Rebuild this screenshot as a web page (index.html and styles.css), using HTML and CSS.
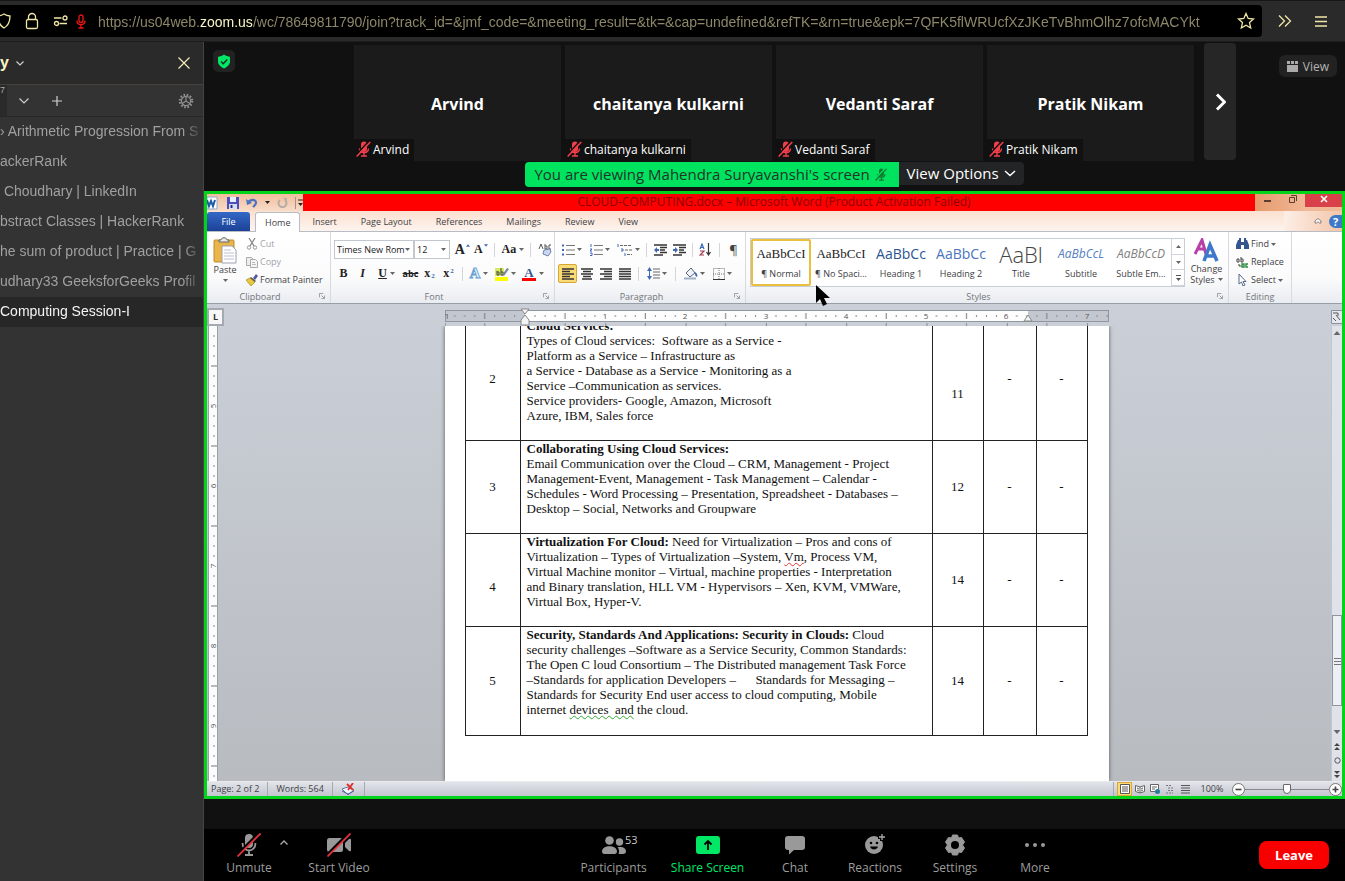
FILE: index.html
```html
<!DOCTYPE html>
<html lang="en">
<head>
<meta charset="utf-8">
<title>Cloud Computing Session-I</title>
<link rel="stylesheet" href="styles.css">
</head>
<body>
<svg class="defs" aria-hidden="true">
  <symbol id="caret" viewBox="0 0 5 3"><path d="M0 0h5L2.500 3z" fill="currentColor"/></symbol>
  <symbol id="mic-off" viewBox="0 0 15 16"><path d="M5 3.500a3 3 0 0 1 6 0V8a3 3 0 0 1-6 0z" fill="currentColor"/><path d="M3.500 7.500c0 5.500 9 5.500 9 0M8 11.500V15M5 15h6" fill="none" stroke="currentColor" stroke-width="1.400"/><path d="M1 13L12.500.500" stroke="var(--gap)" stroke-width="1.500"/><path d="M.7 15.500L14.300 1" stroke="currentColor" stroke-width="1.500"/></symbol>
  <symbol id="launch" viewBox="0 0 7 7"><path d="M.5 5V.5H5M3 3l3 3M6.500 3v3.500H3" fill="none" stroke="#8a8f98"/></symbol>
</svg>

<header class="browser">
  <div class="address">
    <svg class="shield" viewBox="0 0 14 16"><path d="M7 1c2 1.300 4 1.800 6 2 0 6-1.500 9.500-6 12C2.500 12.500 1 9 1 3c2-.2 4-.7 6-2z"/></svg>
    <svg class="lock" viewBox="0 0 14 18"><rect x="1.500" y="7.500" width="11" height="9" rx="1.500"/><path d="M3.500 7.500V5a3.500 3.500 0 0 1 7 0v2.500"/></svg>
    <svg class="perm" viewBox="0 0 16 12"><circle cx="12" cy="3" r="2"/><circle cx="3.500" cy="8.500" r="2"/><path d="M1 3h7.500M6.500 8.500H14"/></svg>
    <svg class="rec" viewBox="0 0 10 15"><rect x="3" y="1" width="4" height="7.500" rx="2"/><path d="M1 6.500c0 5.500 8 5.500 8 0M5 10.500V14M2.500 14h5"/></svg>
    <div class="url">https://us04web.<b>zoom.us</b>/wc/78649811790/join?track_id=&amp;jmf_code=&amp;meeting_result=&amp;tk=&amp;cap=undefined&amp;refTK=&amp;rn=true&amp;epk=7QFK5flWRUcfXzJKeTvBhmOlhz7ofcMACYkt</div>
    <button class="bar-btn" aria-label="Bookmark"><svg viewBox="0 0 18 18" width="18" height="18"><path d="M9 1.500l2.200 5 5.300.5-4 3.600 1.200 5.400L9 13.200 4.300 16l1.200-5.400-4-3.600 5.300-.5z"/></svg></button>
  </div>
  <button class="bar-btn more-tools" aria-label="More tools"><svg viewBox="0 0 14 12" width="14" height="12"><path d="M1 .5L6.500 6 1 11.500M7 .5L12.500 6 7 11.500"/></svg></button>
  <button class="bar-btn" aria-label="Menu"><svg viewBox="0 0 12 11" width="12" height="11"><path d="M0 1h12M0 5.500h12M0 10h12"/></svg></button>
</header>

<div class="below">
<aside class="sidebar">
  <div class="side-head"><span class="side-title">y</span><svg viewBox="0 0 8 5" width="8" height="5"><path d="M.5.500L4 4 7.500.500"/></svg><button class="close" aria-label="Close sidebar"><svg viewBox="0 0 12 12" width="12" height="12"><path d="M.5.500l11 11M11.500.500l-11 11"/></svg></button></div>
  <div class="side-tools">
    <span class="count">7</span>
    <button aria-label="Expand"><svg viewBox="0 0 10 6" width="10" height="6"><path d="M.5.500L5 5 9.500.500"/></svg></button>
    <button aria-label="New tab"><svg viewBox="0 0 10 10" width="10" height="10"><path d="M5 0v10M0 5h10"/></svg></button>
    <button class="gear" aria-label="Settings"><svg viewBox="0 0 16 16" width="16" height="16"><circle cx="8" cy="8" r="4.600"/><circle cx="8" cy="8" r="6.200" stroke-width="2.200" stroke-dasharray="1.600 1.646"/><path d="M8 8V3.500M8 8l-3.800 2.500M8 8l3.800 2.500"/></svg></button>
  </div>
  <ul class="tabs-list">
    <li><a href="#">› Arithmetic Progression From S</a></li>
    <li><a href="#">ackerRank</a></li>
    <li><a href="#">&nbsp;Choudhary | LinkedIn</a></li>
    <li><a href="#">bstract Classes | HackerRank</a></li>
    <li><a href="#">he sum of product | Practice | G</a></li>
    <li><a href="#">udhary33 GeeksforGeeks Profil</a></li>
    <li class="active"><a href="#">Computing Session-I</a></li>
  </ul>
</aside>

<main class="meeting">
  <section class="gallery">
    <button class="secure" aria-label="Meeting is encrypted"><svg viewBox="0 0 14 15" width="14" height="15"><path d="M7 .5c2 1.600 4 2 6 2.200v4.800c0 3.500-3 5.500-6 7-3-1.500-6-3.500-6-7V2.700C3 2.500 5 2.100 7 .5z" fill="#00e766"/><path d="M4 7.500l2.200 2.200L10.200 5.500" fill="none" stroke="#222" stroke-width="1.300"/></svg></button>
    <div class="strip">
      <div class="tile"><strong>Arvind</strong><span class="tag"><svg><use href="#mic-off"/></svg>Arvind</span></div>
      <div class="tile"><strong>chaitanya kulkarni</strong><span class="tag"><svg><use href="#mic-off"/></svg>chaitanya kulkarni</span></div>
      <div class="tile"><strong>Vedanti Saraf</strong><span class="tag"><svg><use href="#mic-off"/></svg>Vedanti Saraf</span></div>
      <div class="tile"><strong>Pratik Nikam</strong><span class="tag"><svg><use href="#mic-off"/></svg>Pratik Nikam</span></div>
      <button class="next" aria-label="Next participants"><svg viewBox="0 0 12 18" width="12" height="18"><path d="M3 1.500L10.500 9 3 16.500" fill="none" stroke="#fff" stroke-width="3"/></svg></button>
    </div>
    <button class="view"><svg viewBox="0 0 11 11" width="11" height="11"><path d="M0 4h11v7H0zM0 0h3v3H0zM4 0h3v3H4zM8 0h3v3H8z" fill="#aaa"/></svg>View</button>
  </section>

  <div class="notice">
    <span class="viewing">You are viewing Mahendra Suryavanshi's screen <svg><use href="#mic-off"/></svg></span>
    <button class="view-options">View Options <svg viewBox="0 0 12 7" width="12" height="7"><path d="M1 1l5 4.500L11 1" fill="none" stroke="#fff" stroke-width="1.500"/></svg></button>
  </div>

  <section class="word">
    <div class="titlebar">
      <div class="qat">
        <svg class="q-word" viewBox="0 0 11 14" width="11" height="14"><path d="M0 1h10v12H0z" fill="#fff" stroke="#8eaccc"/><path d="M0 4l2 6 2-5 2 5 2-6" fill="none" stroke="#1d5aa6" stroke-width="2"/></svg>
        <svg viewBox="0 0 12 12" width="12" height="12"><path d="M0 0h12v12H0z" fill="#4b4fbc"/><path d="M3 0h6v5H3z" fill="#e9edff"/><path d="M2 7h8v5H2z" fill="#d8dcf4"/><path d="M3.500 8h2v3h-2z" fill="#24307a"/></svg>
        <svg viewBox="0 0 12 10" width="12" height="10"><path d="M2 5c2-4 8-4 8-.5C10 7 8 8 7 9" fill="none" stroke="#4e73c2" stroke-width="2.200"/><path d="M0 1l1 6 5-2z" fill="#4e73c2"/></svg>
        <svg class="dark" width="5" height="3"><use href="#caret"/></svg>
        <svg viewBox="0 0 11 10" width="11" height="10"><path d="M3 2a4 4 0 1 0 5 0" fill="none" stroke="#b7aca6" stroke-width="2"/><path d="M6 0h4v4z" fill="#b7aca6"/></svg>
        <svg class="q-more" viewBox="0 0 8 12" width="8" height="12"><path d="M.5 0v12" stroke="#a88f83"/><path d="M3 3h5" stroke="#222"/><path d="M3 6h5L5.500 9z" fill="#222"/></svg>
      </div>
      <div class="doc-title">CLOUD-COMPUTING.docx – Microsoft Word (Product Activation Failed)</div>
      <div class="win">
        <button aria-label="Minimize"><svg viewBox="0 0 8 8" width="8" height="8"><path d="M0 6h7" stroke="#5a3e34" stroke-width="2"/></svg></button>
        <button aria-label="Restore"><svg viewBox="0 0 8 8" width="8" height="8"><path d="M.5 2.500h5v5h-5zM2 .500h5.500V6" fill="none" stroke="#5a3e34"/></svg></button>
        <button class="win-x" aria-label="Close"><svg viewBox="0 0 8 8" width="8" height="8"><path d="M1 1l6 6M7 1L1 7" stroke="#fff" stroke-width="1.600"/></svg></button>
      </div>
    </div>
    <nav class="tabs">
      <button class="file">File</button><button class="home">Home</button><button>Insert</button><button>Page Layout</button><button>References</button><button>Mailings</button><button>Review</button><button>View</button>
      <span class="help"><svg viewBox="0 0 8 6" width="8" height="6"><path d="M1 3l3-2.500L7 3v2H5.500L4 3.700 2.500 5H1z" fill="#fff" stroke="#666" stroke-width=".8"/></svg><button class="q" aria-label="Help">?</button></span>
    </nav>

    <div class="ribbon">
      <div class="group clipboard">
        <div class="content">
          <button class="paste"><svg viewBox="0 0 24 27" width="24" height="27"><rect x="1" y="3" width="20" height="22" rx="1" fill="#eab64c" stroke="#c08a2c"/><path d="M6 5V3h2c0-3 6-3 6 0h2v2z" fill="#e8e8e8" stroke="#666"/><path d="M9 9h10l4 4v13H9z" fill="#fff" stroke="#98a2b4"/><path d="M11 13h7M11 16h10M11 19h10M11 22h10" stroke="#b9c3d3"/></svg>Paste<svg class="caret"><use href="#caret"/></svg></button>
          <div class="stack">
            <button class="off"><svg viewBox="0 0 12 12" width="12" height="12"><path d="M3 0l5 8M9 0L4 8" stroke="#888" stroke-width="1.300"/><circle cx="3" cy="9.500" r="1.700" fill="none" stroke="#999"/><circle cx="9" cy="9.500" r="1.700" fill="none" stroke="#999"/></svg>Cut</button>
            <button class="off"><svg viewBox="0 0 12 12" width="12" height="12"><path d="M.5 1.500h5l2 2v6h-7z" fill="#eee" stroke="#aaa"/><path d="M4.500 3.500h5l2 2v6h-7z" fill="#f5f5f5" stroke="#aaa"/><path d="M6 6.500h3M6 8.500h4" stroke="#bbb"/></svg>Copy</button>
            <button><svg viewBox="0 0 12 12" width="12" height="12"><path d="M7 4l3-4 2 2-3 4z" fill="#555a9c"/><path d="M4 4l5 4-4 4-5-6z" fill="#e9c93b" stroke="#a58a1e" stroke-width=".7"/><path d="M5 3l5 4-1 1-5-4z" fill="#555"/></svg>Format Painter</button>
          </div>
        </div>
        <div class="label">Clipboard<svg class="launch"><use href="#launch"/></svg></div>
      </div>

      <div class="group font">
        <div class="content rows">
          <div class="row">
            <span class="combo face"><select aria-label="Font"><option>Times New Rom</option></select><svg class="caret"><use href="#caret"/></svg></span>
            <span class="combo size"><select aria-label="Font size"><option>12</option></select><svg class="caret"><use href="#caret"/></svg></span>
            <button class="t w20 big">A<svg class="mark" viewBox="0 0 5 3"><path d="M0 3h5L2.500 0z"/></svg></button><button class="t w20">A<svg class="mark" viewBox="0 0 5 3"><path d="M0 0h5L2.500 3z"/></svg></button><i class="sep"></i>
            <button class="t w28">Aa<svg class="caret"><use href="#caret"/></svg></button><i class="sep"></i>
            <button class="w20" aria-label="Clear formatting"><svg viewBox="0 0 14 14" width="14" height="14"><path d="M1 6L3 1l2 5M7 1v5h2V3H7M13 2h-2v4h2" fill="none" stroke="#555"/><path d="M6 7l6-1 1 3-3 4-5-2z" fill="#c9d7f0" stroke="#6a83ad"/></svg></button>
          </div>
          <div class="row">
            <button class="t w20"><b>B</b></button><button class="t w20"><i>I</i></button><button class="t w30"><u>U</u><svg class="caret"><use href="#caret"/></svg></button><button class="t w20 small"><s>abc</s></button><button class="t w20">x<sub>2</sub></button><button class="t w20">x<sup>2</sup></button><i class="sep"></i>
            <button class="t w24 glow">A<svg class="caret"><use href="#caret"/></svg></button>
            <button class="w28" aria-label="Highlight"><svg viewBox="0 0 14 14" width="14" height="14"><path d="M0 10h13v4H0z" fill="#ff0"/><path d="M0 1h9v8H0z" fill="#d6ea60"/><path d="M2 4v4h2V5H2M6 1v7h2V5H6" fill="none" stroke="#444"/><path d="M7 8l5-7 2 1-5 7z" fill="#7a8899"/></svg><svg class="caret"><use href="#caret"/></svg></button>
            <button class="t w28 ink"><span>A</span><svg class="caret"><use href="#caret"/></svg></button>
          </div>
        </div>
        <div class="label">Font<svg class="launch"><use href="#launch"/></svg></div>
      </div>

      <div class="group para">
        <div class="content rows">
          <div class="row">
            <button class="w28" aria-label="Bullets"><svg viewBox="0 0 13 12" width="13" height="12"><path d="M0 1.500h2M0 6h2M0 10.500h2" stroke="#3f68b5" stroke-width="2"/><path d="M4 1.500h9M4 6h9M4 10.500h9" stroke="#777"/></svg><svg class="caret"><use href="#caret"/></svg></button>
            <button class="w28" aria-label="Numbering"><svg viewBox="0 0 13 12" width="13" height="12"><path d="M1 0v3M0 5h2l-2 2h2M0 9h2v2.500H0" fill="none" stroke="#3f68b5"/><path d="M4 1.500h9M4 6h9M4 10.500h9" stroke="#777"/></svg><svg class="caret"><use href="#caret"/></svg></button>
            <button class="w28" aria-label="Multilevel list"><svg viewBox="0 0 16 12" width="16" height="12"><path d="M1 0v3M4 5h2v2H4M8 9v3" fill="none" stroke="#3f68b5"/><path d="M3 1.500h11M8 6h7M10 10.500h5" stroke="#666" stroke-dasharray="3 1"/></svg><svg class="caret"><use href="#caret"/></svg></button><i class="sep"></i>
            <button class="w20" aria-label="Decrease indent"><svg viewBox="0 0 13 12" width="13" height="12"><path d="M0 1h13M6 3.500h7M6 6h5M6 8.500h7M0 11h9" stroke="#333" stroke-width="1.300"/><path d="M0 6l3-3v2h2v2H3v2z" fill="#3f68b5"/></svg></button>
            <button class="w20" aria-label="Increase indent"><svg viewBox="0 0 13 12" width="13" height="12"><path d="M0 1h13M6 3.500h7M6 6h5M6 8.500h7M0 11h9" stroke="#333" stroke-width="1.300"/><path d="M5 6L2 3v2H0v2h2v2z" fill="#3f68b5"/></svg></button><i class="sep slim"></i>
            <button class="w20" aria-label="Sort"><svg viewBox="0 0 13 13" width="13" height="13"><path d="M1 6l2-5 2 5M1.500 4.500h3" fill="none" stroke="#3f68b5" stroke-width="1.200"/><path d="M1 8h4l-4 4h4" fill="none" stroke="#a33a52" stroke-width="1.200"/><path d="M9.500 0v11M7.500 9l2 3 2-3" fill="none" stroke="#333" stroke-width="1.200"/></svg></button><i class="sep"></i>
            <button class="w20 pil">¶</button>
          </div>
          <div class="row">
            <button class="w20 on" aria-label="Align left"><svg viewBox="0 0 12 12" width="12" height="12"><path d="M0 1h12M0 3.500h8M0 6h12M0 8.500h8M0 11h12" stroke="#333" stroke-width="1.300"/></svg></button>
            <button class="w20" aria-label="Center"><svg viewBox="0 0 12 12" width="12" height="12"><path d="M0 1h12M2 3.500h8M0 6h12M2 8.500h8M1 11h10" stroke="#333" stroke-width="1.300"/></svg></button>
            <button class="w20" aria-label="Align right"><svg viewBox="0 0 12 12" width="12" height="12"><path d="M0 1h12M4 3.500h8M0 6h12M4 8.500h8M0 11h12" stroke="#333" stroke-width="1.300"/></svg></button>
            <button class="w20" aria-label="Justify"><svg viewBox="0 0 12 12" width="12" height="12"><path d="M0 1h12M0 3.500h12M0 6h12M0 8.500h12M0 11h12" stroke="#333" stroke-width="1.300"/></svg></button><i class="sep"></i>
            <button class="w28" aria-label="Line spacing"><svg viewBox="0 0 13 13" width="13" height="13"><path d="M2.500 2v9" stroke="#3f68b5"/><path d="M0 4l2.500-4L5 4zM0 9l2.500 4L5 9z" fill="#3f68b5"/><path d="M6 2h7M6 5h7M6 8h7M6 11h7" stroke="#666"/></svg><svg class="caret"><use href="#caret"/></svg></button><i class="sep"></i>
            <button class="w28" aria-label="Shading"><svg viewBox="0 0 14 13" width="14" height="13"><path d="M2 6l5-5 4 5-5 4z" fill="#eef2f8" stroke="#56657c"/><path d="M11 5c2 1 3 3 2 5-2-1-2-2-2-5z" fill="#3f68b5"/><path d="M0 11.500h12" stroke="#9fb0c4" stroke-width="2"/></svg><svg class="caret"><use href="#caret"/></svg></button>
            <button class="w28" aria-label="Borders"><svg viewBox="0 0 12 12" width="12" height="12"><path d="M.5.500h11v11H.5zM6 0v12M0 6h12" fill="none" stroke="#777" stroke-dasharray="1 1"/><path d="M0 11.500h12" stroke="#333"/></svg><svg class="caret"><use href="#caret"/></svg></button>
          </div>
        </div>
        <div class="label">Paragraph<svg class="launch"><use href="#launch"/></svg></div>
      </div>

      <div class="group styles">
        <div class="content">
          <div class="style-box">
            <button class="card sel"><span class="s-serif">AaBbCcI</span><span>¶ Normal</span></button>
            <button class="card"><span class="s-serif">AaBbCcI</span><span>¶ No Spaci...</span></button>
            <button class="card"><span class="s-h1">AaBbCc</span><span>Heading 1</span></button>
            <button class="card"><span class="s-h2">AaBbCc</span><span>Heading 2</span></button>
            <button class="card"><span class="s-title">AaBl</span><span>Title</span></button>
            <button class="card"><span class="s-sub">AaBbCcL</span><span>Subtitle</span></button>
            <button class="card"><span class="s-em">AaBbCcD</span><span>Subtle Em...</span></button>
            <div class="spin"><button aria-label="Up"><svg class="caret up"><use href="#caret"/></svg></button><button aria-label="Down"><svg class="caret"><use href="#caret"/></svg></button><button aria-label="More"><svg viewBox="0 0 5 6" width="5" height="6"><path d="M0 .5h5" stroke="#555"/><path d="M0 3h5L2.500 6z" fill="#555"/></svg></button></div>
          </div>
          <button class="change"><svg viewBox="0 0 26 25" width="26" height="25"><path d="M1 16L8 2l4 14M3 11h8" fill="none" stroke="#b640a8" stroke-width="3"/><path d="M10 23l6-16 7 16M12 18h9" fill="none" stroke="#3d78cc" stroke-width="3.500"/></svg><span>Change</span><span>Styles <svg class="caret"><use href="#caret"/></svg></span></button>
        </div>
        <div class="label">Styles<svg class="launch"><use href="#launch"/></svg></div>
      </div>

      <div class="group editing">
        <div class="content">
          <div class="stack">
            <button><svg viewBox="0 0 13 12" width="13" height="12"><path d="M2 2h3v2h3V2h3l2 5v4H8V7H5v4H0V7z" fill="#35558f"/><path d="M3 0h2v2H3zM8 0h2v2H8z" fill="#35558f"/></svg>Find <svg class="caret"><use href="#caret"/></svg></button>
            <button><svg viewBox="0 0 13 12" width="13" height="12"><path d="M1 3h2v3H1zM5 1v5h2V3H5M3 8v2h2" fill="none" stroke="#444"/><path d="M6 8h2v3H6zM12 8h-2v3h2" fill="none" stroke="#2a8a3c" stroke-width="1.400"/></svg>Replace</button>
            <button><svg viewBox="0 0 13 12" width="13" height="12"><path d="M3 0v10l2.500-2 1.500 4 2-1-2-3.500h3z" fill="#fff" stroke="#55698a"/></svg>Select <svg class="caret"><use href="#caret"/></svg></button>
          </div>
        </div>
        <div class="label">Editing</div>
      </div>
    </div>

    <div class="workspace">
      <div class="corner">L</div>
      <svg class="hruler" viewBox="0 0 664 22" width="664" height="22">
        <defs><pattern id="tick" x="80" width="80.300" height="22" patternUnits="userSpaceOnUse"><path d="M10 11v2M20 11v2M30 11v2M50 11v2M60 11v2M70 11v2" stroke="#888"/><path d="M40 9v6" stroke="#777"/><path d="M40 19v3M.5 19v3" stroke="#888"/></pattern></defs>
        <rect x=".5" y="6.500" width="663" height="11" fill="#c3c7d0" stroke="#9096a0"/><rect x="80" y="7" width="503" height="10" fill="#fdfdfd"/>
        <rect width="664" height="22" fill="url(#tick)"/>
        <g class="nums"><text x="2" y="15">1</text><text x="160" y="15">1</text><text x="240" y="15">2</text><text x="321" y="15">3</text><text x="401" y="15">4</text><text x="481" y="15">5</text><text x="561" y="15">6</text><text x="642" y="15">7</text></g>
        <path d="M76 5h8l-4 5zM76 16l4-5 4 5v5h-8zM579 17l4-6 4 6z" fill="#f4f4f4" stroke="#888"/>
      </svg>
      <button class="ruler-toggle" aria-label="Toggle ruler"><svg viewBox="0 0 11 14" width="11" height="14"><path d="M.5.500h12v13H.5z" fill="#e4e8ee" stroke="#8b929c"/><path d="M2 3h5v3M5 5l4 5M2 8l3 3" fill="none" stroke="#555"/></svg></button>

      <svg class="vruler" viewBox="0 0 13 456" preserveAspectRatio="xMidYMin slice">
        <defs><pattern id="vtick" width="13" height="80" patternUnits="userSpaceOnUse"><path d="M6 10h2M6 20h2M6 30h2M6 50h2M6 60h2M6 70h2" stroke="#888"/><path d="M4 40h6" stroke="#777"/></pattern></defs>
        <rect x="1.500" y="-1" width="9" height="900" fill="#fcfcfc" stroke="#9aa0aa"/><rect width="13" height="900" fill="url(#vtick)"/>
        <g class="nums"><text transform="translate(9 80) rotate(-90)">5</text><text transform="translate(9 160) rotate(-90)">6</text><text transform="translate(9 240) rotate(-90)">7</text><text transform="translate(9 320) rotate(-90)">8</text><text transform="translate(9 400) rotate(-90)">9</text></g>
      </svg>

      <article class="page">
        <table>
          <colgroup><col class="c-no"><col class="c-text"><col class="c-hr"><col class="c-a"><col class="c-b"></colgroup>
          <tr class="r8"><td>2</td><td class="txt"><b>Cloud Services:</b><br>Types of Cloud services: &nbsp;Software as a Service -<br>Platform as a Service – Infrastructure as<br>a Service - Database as a Service - Monitoring as a<br>Service –Communication as services.<br>Service providers- Google, Amazon, Microsoft<br>Azure, IBM, Sales force</td><td><br>&nbsp;<br>11</td><td>-</td><td>-</td></tr>
          <tr class="r6"><td>3</td><td class="txt"><b>Collaborating Using Cloud Services:</b><br>Email Communication over the Cloud – CRM, Management - Project<br>Management-Event, Management - Task Management – Calendar -<br>Schedules - Word Processing – Presentation, Spreadsheet - Databases –<br>Desktop – Social, Networks and Groupware</td><td>12</td><td>-</td><td>-</td></tr>
          <tr class="r6"><td class="low">4</td><td class="txt"><b>Virtualization For Cloud:</b> Need for Virtualization – Pros and cons of<br>Virtualization – Types of Virtualization –System, <span class="bad">Vm</span>, Process VM,<br>Virtual Machine monitor – Virtual, machine properties - Interpretation<br>and Binary translation, HLL VM - Hypervisors – Xen, KVM, VMWare,<br>Virtual Box, Hyper-V.</td><td>14</td><td>-</td><td>-</td></tr>
          <tr class="r7"><td>5</td><td class="txt"><b>Security, Standards And Applications: Security in Clouds:</b> Cloud<br>security challenges –Software as a Service Security, Common Standards:<br>The Open C loud Consortium – The Distributed management Task Force<br>–Standards for application Developers – &nbsp; &nbsp; &nbsp;Standards for Messaging –<br>Standards for Security End user access to cloud computing, Mobile<br>internet <span class="gram">devices &nbsp;and</span> the cloud.</td><td>14</td><td>-</td><td>-</td></tr>
        </table>
      </article>

      <div class="scroll">
        <button aria-label="Scroll up"><svg class="caret up big-caret"><use href="#caret"/></svg></button>
        <div class="track"><div class="thumb"></div></div>
        <button aria-label="Scroll down"><svg class="caret big-caret"><use href="#caret"/></svg></button>
        <button aria-label="Previous page"><svg viewBox="0 0 6 7" width="6" height="7"><path d="M0 3l3-3 3 3zM0 7l3-3 3 3z" fill="#444"/></svg></button>
        <button aria-label="Browse object"><svg viewBox="0 0 7 7" width="7" height="7"><circle cx="3.500" cy="3.500" r="2.700" fill="none" stroke="#555"/></svg></button>
        <button aria-label="Next page"><svg viewBox="0 0 6 7" width="6" height="7"><path d="M0 0l3 3 3-3zM0 4l3 3 3-3z" fill="#444"/></svg></button>
      </div>
    </div>

    <div class="status">
      <span class="cell">Page: 2 of 2</span><span class="cell">Words: 564</span>
      <span class="cell"><svg viewBox="0 0 15 12" width="15" height="12"><path d="M1 6l6-2 6 3-6 5z" fill="#f4f6fc" stroke="#6678aa"/><path d="M1 8l6 3 6-3" fill="none" stroke="#4a5fa5"/><path d="M6 1l6 6M12 0L7 7" stroke="#e0302a" stroke-width="1.800"/></svg></span>
      <span class="views">
        <button class="on" aria-label="Print layout"><svg viewBox="0 0 10 10" width="10" height="10"><path d="M.5.500h9v9h-9zM2 3h6M2 5h6M2 7h6" fill="#fff" stroke="#555"/></svg></button>
        <button aria-label="Full screen reading"><svg viewBox="0 0 10 10" width="10" height="10"><path d="M.5 1.500L5 3l4.500-1.500v6L5 9 .5 7.500zM5 3v6M2 4l2 1M2 6l2 1M8 4L6 5M8 6L6 7" fill="#fafafa" stroke="#666"/></svg></button>
        <button aria-label="Web layout"><svg viewBox="0 0 10 10" width="10" height="10"><path d="M.5.500h8v7h-8zM2 3h5M2 5h3" fill="#fff" stroke="#666"/><circle cx="7.500" cy="7.500" r="2.500" fill="#287c9c"/></svg></button>
        <button aria-label="Outline"><svg viewBox="0 0 10 10" width="10" height="10"><path d="M1 1.500h6M3 4h6M3 6.500h6M1 9h7" stroke="#777" stroke-dasharray="2 1"/></svg></button>
        <button aria-label="Draft"><svg viewBox="0 0 10 10" width="10" height="10"><path d="M1 1.500h9M1 4h9M1 6.500h9M1 9h9" stroke="#555"/></svg></button>
      </span>
      <span class="pct">100%</span>
      <button class="zb" aria-label="Zoom out"><svg viewBox="0 0 13 13" width="13" height="13"><circle cx="6.500" cy="6.500" r="6" fill="#fff" stroke="#777"/><path d="M3.500 6.500h6" stroke="#444" stroke-width="1.600"/></svg></button>
      <input class="zoom" type="range" aria-label="Zoom" min="0" max="100" value="50">
      <button class="zb" aria-label="Zoom in"><svg viewBox="0 0 13 13" width="13" height="13"><circle cx="6.500" cy="6.500" r="6" fill="#fff" stroke="#777"/><path d="M3.500 6.500h6M6.500 3.500v6" stroke="#444" stroke-width="1.600"/></svg></button>
    </div>
    <svg class="pointer" viewBox="0 0 14 21" width="14" height="21"><path d="M0 0v18l4-4 3 7 4-2-3-6h6z" fill="#000"/></svg>
  </section>

  <footer class="controls">
    <div class="left">
      <button class="ctl"><svg viewBox="0 0 24 24" width="24" height="24"><rect x="8" y="1" width="8" height="14" rx="4" fill="#999"/><path d="M5.500 10c0 10 13 10 13 0M12 17.500V22M8 22h8" fill="none" stroke="#999" stroke-width="1.800"/><path d="M0 22L22 0" stroke="#000" stroke-width="3"/><path d="M.5 23.500l23-23" stroke="#e8333e" stroke-width="1.700"/></svg>Unmute</button>
      <button class="arrow" aria-label="Audio options"><svg viewBox="0 0 8 5" width="8" height="5"><path d="M.5 4.500L4 1l3.500 3.500" fill="none" stroke="#aaa" stroke-width="1.300"/></svg></button>
      <button class="ctl"><svg viewBox="0 0 24 24" width="24" height="24"><rect x="0" y="5" width="16" height="14" rx="2.500" fill="#999"/><path d="M18 10l4-4q2-1 2 1v10q0 2-2 1l-4-4z" fill="#999"/><path d="M0 22L22 0" stroke="#000" stroke-width="3"/><path d="M.5 23.500l23-23" stroke="#e8333e" stroke-width="1.700"/></svg>Start Video</button>
    </div>
    <div class="center">
      <button class="ctl people"><svg viewBox="0 0 24 24" width="24" height="24" fill="#999"><circle cx="7.500" cy="7.500" r="4.300"/><circle cx="17.500" cy="9" r="3.700"/><path d="M0 18.500c0-7 15-7 15 0 0 3-2 2.500-7.500 2.500S0 21.500 0 18.500z"/><path d="M15.500 14.300c5-1.300 8.500.7 8.500 4.200 0 3-3 2.500-7.500 2.500 1-2 .8-5-1-6.700z"/></svg><span class="num">53</span>Participants</button>
      <button class="ctl share"><svg viewBox="0 0 24 24" width="24" height="24"><rect y="3" width="24" height="18" rx="3" fill="#00e766"/><path d="M12 17V8.500M8.500 11.500L12 8l3.500 3.500" fill="none" stroke="#000" stroke-width="1.800"/></svg>Share Screen</button>
      <button class="ctl"><svg viewBox="0 0 24 24" width="24" height="24"><path d="M5 3h14a3 3 0 0 1 3 3v8a3 3 0 0 1-3 3h-8l-5 4.500V17H5a3 3 0 0 1-3-3V6a3 3 0 0 1 3-3z" fill="#999"/></svg>Chat</button>
      <button class="ctl"><svg viewBox="0 0 24 24" width="24" height="24"><circle cx="11" cy="12" r="9" fill="#999"/><circle cx="8" cy="10" r="1.300"/><circle cx="14" cy="10" r="1.300"/><path d="M7 13.500c1 4 7 4 8 0z"/><path d="M19 0v8M15 4h8" stroke="#000" stroke-width="4"/><path d="M19 1v6M16 4h6" stroke="#aaa" stroke-width="1.300"/></svg>Reactions</button>
      <button class="ctl"><svg viewBox="0 0 24 24" width="24" height="24"><path d="M9.500 2h5l1 3 3-.5 3 4.500-2 3 2 3-3 4.500-3-.5-1 3h-5l-1-3-3 .5-3-4.500 2-3-2-3 3-4.500 3 .500z" fill="#999" stroke="#999" stroke-linejoin="round"/><circle cx="12" cy="12" r="4" fill="#000"/></svg>Settings</button>
      <button class="ctl"><svg viewBox="0 0 24 24" width="24" height="24" fill="#999"><circle cx="4" cy="12" r="2"/><circle cx="12" cy="12" r="2"/><circle cx="20" cy="12" r="2"/></svg>More</button>
    </div>
    <button class="leave">Leave</button>
  </footer>
</main>
</div>
</body>
</html>
```
FILE: styles.css
```css
* { box-sizing: border-box; }
html, body { height: 100%; }
body { margin: 0; display: flex; flex-direction: column; overflow: hidden; background: #111; font-family: "Open Sans", "Noto Sans", sans-serif; }
button { margin: 0; padding: 0; border: 0; background: none; color: inherit; font: inherit; white-space: nowrap; }
svg { flex: none; }
.defs { position: absolute; width: 0; height: 0; }

/* Browser toolbar */
.browser { flex: none; display: flex; align-items: center; height: 42px; padding-right: 18px; background: #2a2a2a; border-top: 1px solid #171717; border-bottom: 1px solid #1c1c1c; }
.address { flex: 1; min-width: 0; display: flex; align-items: center; height: 32px; padding-right: 7px; background: #000; border-radius: 0 4px 4px 0; }
.browser svg { fill: none; stroke: #efe6a6; stroke-width: 1.3; }
.address .shield { width: 14px; height: 16px; margin-left: -3px; }
.address .lock { width: 14px; height: 18px; margin-left: 14px; }
.address .perm { width: 16px; height: 12px; margin-left: 14px; }
.address .rec { width: 10px; height: 15px; margin-left: 7px; stroke: #f01414; }
.url { flex: 1; min-width: 0; overflow: hidden; margin: 0 8px 0 12px; padding-top: 2px; color: #8c8768; font: 14px/20px "Liberation Sans", sans-serif; white-space: nowrap; -webkit-mask-image: linear-gradient(to left, transparent, #000 28px); mask-image: linear-gradient(to left, transparent, #000 28px); }
.url b { color: #fbf5c4; font-weight: 500; }
.bar-btn { display: flex; }
.more-tools { margin: 0 23px 0 16px; }

.below { flex: 1; min-height: 0; display: flex; }

/* Sidebar */
.sidebar { flex: none; width: 204px; overflow: hidden; background: #333; border-right: 1px solid #444; font-family: "Liberation Sans", sans-serif; }
.sidebar svg { fill: none; stroke: #cfcfcf; stroke-width: 1.2; }
.side-head { display: flex; align-items: center; gap: 7px; height: 43px; padding-right: 13px; background: #2a2a2a; border-bottom: 1px solid #46403c; }
.side-head .side-title { color: #fbf5c4; font-size: 16px; font-weight: 700; }
.side-head .close { margin-left: auto; display: flex; }
.side-head .close svg { stroke: #f2eab8; }
.side-tools { display: flex; align-items: center; height: 32px; padding-right: 9px; border-bottom: 1px solid #262626; }
.side-tools .count { align-self: stretch; width: 7px; margin-right: 12px; background: #2a2a2a; color: #aaa; font-size: 9px; line-height: 11px; }
.side-tools button { display: flex; margin-right: 23px; }
.side-tools .gear { margin: 0 0 0 auto; }
.side-tools .gear svg { stroke: #8f8f8f; }
.tabs-list { margin: 0; padding: 0; list-style: none; }
.tabs-list li { height: 30px; }
.tabs-list a { display: block; overflow: hidden; color: #a0a0a0; font-size: 14px; line-height: 28px; white-space: nowrap; text-decoration: none; -webkit-mask-image: linear-gradient(to left, transparent, #000 20px); mask-image: linear-gradient(to left, transparent, #000 20px); }
.tabs-list .active { background: #272727; }
.tabs-list .active a { color: #f4f4f4; }

/* Meeting */
.meeting { flex: 1; min-width: 0; display: flex; flex-direction: column; background: #111; }
.gallery { display: grid; grid-template-columns: 1fr auto 1fr; align-items: start; padding: 1px 8px 0 9px; }
.secure { display: grid; place-items: center; width: 22px; height: 22px; margin-top: 7px; border-radius: 5px; background: #222; }
.strip { display: flex; gap: 4px; padding: 0 2px 0 42px; }
.tile { position: relative; display: grid; place-items: center; width: 207px; height: 116px; margin-top: 2px; padding-top: 2px; background: #1b1b1b; color: #fff; }
.tile strong { font-size: 16px; line-height: 22px; }
.tag { position: absolute; left: 0; bottom: 0; display: flex; align-items: center; gap: 2px; height: 22px; padding: 0 5px 2px 2px; background: #111; font-size: 12px; }
.tag svg { --gap: #111; width: 15px; height: 16px; color: #f13f4b; }
.next { display: grid; place-items: center; width: 32px; height: 117px; margin-left: 6px; border-radius: 4px; background: #262626; }
.view { justify-self: end; display: flex; align-items: center; gap: 5px; height: 22px; margin-top: 12px; padding: 0 8px; border-radius: 6px; background: #222; color: #b4b4b4; font-size: 12px; }
.notice { display: flex; justify-content: center; height: 25px; margin: 1px 0 4px; font-size: 15px; line-height: 25px; white-space: nowrap; }
.viewing { padding: 0 12px 0 9px; border-radius: 4px 0 0 4px; background: #00e35e; color: #20342a; }
.viewing svg { --gap: #00e35e; width: 12px; height: 13px; margin-left: 1px; vertical-align: -1px; color: #12792f; }
.view-options { display: flex; align-items: center; gap: 5px; height: 23px; padding: 0 8px; border-radius: 0 4px 4px 0; background: #232426; color: #fff; }

/* Shared window */
.word { position: relative; flex: 1; min-height: 0; display: flex; flex-direction: column; margin-bottom: 30px; border: 3px solid #00d31a; overflow: hidden; color: #3f4144; font-size: 9px; line-height: 12px; background: #fff; }
.titlebar { flex: none; display: flex; height: 17px; background: #efbf9c; }
.qat { display: flex; align-items: center; gap: 7px; width: 96px; background: linear-gradient(#f0bd9c, #f9dcc9); color: #222; }
.qat .q-word { margin-right: 2px; }
.qat .q-more { margin-left: auto; margin-right: 1px; }
.doc-title { flex: 1; overflow: hidden; padding-right: 10px; background: #f00; color: #8c0000; font-size: 12px; line-height: 16px; text-align: center; white-space: nowrap; }
.win { display: flex; width: 87px; background: linear-gradient(90deg, #e69a6c, #f1b898 60%); }
.win button { flex: 1; display: flex; justify-content: center; padding-top: 1px; }
.win .win-x { flex: none; width: 37px; height: 13px; background: #d8404a; }
.tabs { flex: none; display: flex; align-items: flex-end; height: 21px; border-bottom: 1px solid #b8bcc4; background: linear-gradient(#fbe0d0, #fdf4ef); }
.tabs > button { height: 18px; padding: 0 12px; }
.tabs .file { width: 43px; height: 19px; margin-right: 5px; padding: 0; border-radius: 3px 3px 0 0; background: linear-gradient(#3468c6, #1c4296); color: #fff; }
.tabs .home { height: 20px; margin-bottom: -1px; padding: 0 9px; border: 1px solid #b8bcc4; border-bottom: 0; border-radius: 3px 3px 0 0; background: #fff; }
.help { display: flex; align-items: center; gap: 7px; height: 20px; margin-left: auto; padding-left: 30px; background: linear-gradient(90deg, #fdeee6, #f3c5a8); }
.help .q { width: 13px; height: 13px; border-radius: 7px 0 0 7px; background: #3f78c8; color: #fff; font-size: 11px; font-weight: 700; line-height: 13px; }

.ribbon { flex: none; display: flex; height: 72px; background: linear-gradient(#fff, #fbfbfc 65%, #e9ecf0); border-bottom: 1px solid #989ea8; }
.group { flex: none; display: flex; flex-direction: column; border-right: 1px solid #d6d9df; }
.group .content { flex: 1; display: flex; padding-top: 3px; }
.group .label { display: flex; align-items: center; justify-content: center; position: relative; height: 13px; padding: 0 17px 0 0; color: #72757b; }
.launch { position: absolute; right: 5px; top: 3px; width: 6px; height: 6px; }
.caret { width: 5px; height: 3px; color: #666; }
.up { rotate: 180deg; }
.clipboard { width: 124px; }
.font { width: 224px; }
.para { width: 191px; }
.styles { width: 483px; }
.editing { width: 63px; }
.paste { display: flex; flex-direction: column; align-items: center; width: 36px; padding-top: 2px; }
.paste .caret { margin-top: 3px; }
.stack { display: flex; flex-direction: column; padding-left: 3px; }
.editing .stack { padding-left: 7px; }
.group.editing .label { padding-right: 0; }
.stack button { display: flex; align-items: center; gap: 2px; height: 18px; }
.stack .off { color: #a2a4a8; }
.group .rows { flex-direction: column; gap: 5px; padding: 8px 0 0 3px; }
.row { display: flex; align-items: center; height: 19px; }
.row button { display: flex; align-items: center; justify-content: center; gap: 2px; height: 19px; }
.combo { display: flex; align-items: center; height: 19px; border: 1px solid #c3c7ce; background: #fff; padding-right: 3px; }
.combo select { flex: 1; min-width: 0; padding: 0 0 0 2px; border: 0; appearance: none; background: none; color: #222; font: 9px/12px "Open Sans", sans-serif; }
.face { width: 81px; }
.size { width: 37px; margin-right: 3px; }
.w20 { width: 19px; }
.w24 { width: 24px; }
.w28 { width: 28px; }
.w30 { width: 29px; }
.sep { flex: none; width: 1px; height: 14px; margin: 0 4px; background: #d2d5da; }
.slim { margin: 0 3px; }
.row .t { gap: 1px; color: #222; font: 700 12px/19px "Liberation Serif", serif; }
.row .big { font-size: 14px; }
.mark { align-self: flex-start; width: 4px; height: 3px; margin-top: 4px; fill: #3f68b5; }
.row .small { font-size: 9px; font-family: "Open Sans", sans-serif; }
.row .t sup, .row .t sub { color: #3f68b5; font-size: 7px; line-height: 7px; }
.row .t sup { align-self: flex-start; padding-top: 4px; }
.row .t sub { align-self: flex-end; padding-bottom: 3px; }
.row .t .caret { margin-left: 2px; }
.row .glow { color: #fff; font-size: 15px; -webkit-text-stroke: 1px #6ba3d6; }
.row .ink { color: #34558f; font-size: 13px; }
.ink span { height: 15px; line-height: 13px; padding: 0 2px; border-bottom: 3px solid #f00; }
.row .pil { font-size: 13px; }
.row .on { border: 1px solid #d5a63a; border-radius: 2px; background: #fbdc74; }

.styles .content { padding: 6px 0 0 4px; }
.style-box { display: flex; height: 49px; border: 1px solid #c9cdd4; background: #fff; }
.card { display: flex; flex-direction: column; align-items: center; justify-content: flex-end; width: 60px; padding-bottom: 6px; color: #3c3e42; }
.card span { flex: none; line-height: 12px; }
.card span:first-child { line-height: 28px; font-size: 13px; }
.card.sel { padding-bottom: 4px; border: 2px solid #eabf3d; border-radius: 2px; }
.card .s-serif { color: #222; font-family: "Liberation Serif", serif; }
.card span.s-h1 { color: #2b5590; font-size: 14px; }
.card span.s-h2 { color: #4a74bd; font-size: 14px; }
.card span.s-title { color: #444; font-size: 22px; font-weight: 300; }
.card span.s-sub { color: #5580c4; font-size: 12px; font-style: italic; }
.card span.s-em { color: #808080; font-size: 12px; font-style: italic; }
.spin { display: flex; flex-direction: column; width: 13px; border-left: 1px solid #d0d3d9; }
.spin button { flex: 1; display: grid; place-items: center; border-bottom: 1px solid #d0d3d9; }
.change { flex: 1; display: flex; flex-direction: column; align-items: center; line-height: 11px; }
.change span { display: flex; align-items: center; gap: 3px; }

/* Document area */
.workspace { flex: 1; min-height: 0; display: grid; grid-template-columns: 13px 1fr 11px; grid-template-rows: 22px 1fr; background: linear-gradient(#cbd0d8, #b8bbc0); }
.corner { width: 17px; height: 18px; margin-top: 4px; border: 2px solid #a4a9b2; background: #f7f7f7; color: #333; font-weight: 700; line-height: 14px; text-align: center; }
.hruler { justify-self: center; margin-left: 2px; }
.nums { fill: #555; font-size: 8px; text-anchor: middle; }
.ruler-toggle { display: flex; padding-top: 6px; }
.vruler { width: 13px; height: 100%; }
.page { justify-self: center; width: 664px; min-height: 0; margin-left: 2px; overflow: hidden; padding-left: 20px; background: #fff; box-shadow: 0 0 4px #555; clip-path: inset(0 -6px 0 -6px); }
.page table { width: 623px; margin-top: -9px; border-collapse: collapse; table-layout: fixed; color: #111; font: 13px/15px "Liberation Serif", serif; }
.page td { padding: 0 0 2px; border: 1px solid #222; text-align: center; white-space: nowrap; }
.page .txt { padding: 0 0 0 6px; text-align: left; vertical-align: top; }
.page .low { padding-top: 14px; }
.c-no { width: 55px; }
.c-text { width: 412px; }
.c-hr { width: 51px; }
.c-a { width: 53px; }
.r8 { height: 123px; }
.r6 { height: 93px; }
.r7 { height: 109px; }
.bad { text-decoration: underline wavy #d33 1px; }
.gram { text-decoration: underline wavy #3a3 1px; }
.scroll { display: flex; flex-direction: column; background: #dfe3e9; border-left: 1px solid #c2c7cf; }
.scroll button { display: grid; place-items: center; height: 14px; }
.big-caret { width: 8px; height: 4px; }
.track { flex: 1; display: flex; flex-direction: column; justify-content: flex-end; padding-bottom: 19px; }
.thumb { height: 91px; border: 1px solid #8e95a0; background: linear-gradient(#777, #777) center 42px / 7px 1px no-repeat, linear-gradient(#777, #777) center 45px / 7px 1px no-repeat, linear-gradient(#777, #777) center 48px / 7px 1px no-repeat, #eceff3; }
.status { flex: none; display: flex; align-items: center; height: 15px; border-top: 1px solid #e8eaee; background: linear-gradient(#e2e4ea, #c3c6cf); }
.cell { display: flex; align-items: center; height: 14px; padding: 0 8px 0 4px; border-right: 1px solid #a4a8b0; }
.cell + .cell { padding: 0 8px; }
.views { display: flex; gap: 1px; margin-left: auto; padding-left: 3px; border-left: 1px solid #a4a8b0; }
.views button { display: grid; place-items: center; width: 14px; height: 14px; }
.views .on { width: 15px; border: 1px solid #dba63a; background: #fbdc74; }
.pct { width: 40px; text-align: center; }
.zb { display: flex; }
.zoom { appearance: none; width: 84px; height: 14px; margin: 0; background: linear-gradient(#888, #888) center / 100% 1px no-repeat; }
.zoom::-webkit-slider-thumb { appearance: none; width: 8px; height: 10px; border: 1px solid #666; border-radius: 1px 1px 4px 4px; background: #fff; }
.pointer { position: absolute; left: 609px; top: 91px; }

/* Meeting controls */
.controls { flex: none; display: flex; align-items: center; justify-content: space-between; height: 52px; padding: 0 16px 0 5px; background: #000; color: #9d9d9d; font-size: 12px; line-height: 16px; }
.left, .center { display: flex; padding-bottom: 2px; }
.center { padding-left: 4px; }
.ctl { position: relative; display: flex; flex-direction: column; align-items: center; gap: 3px; width: 80px; }
.arrow { display: flex; justify-content: center; width: 10px; margin: 0 10px 0 -10px; padding-top: 7px; }
.people { width: 93px; }
.share { width: 95px; color: #00e766; }
.num { position: absolute; left: 58px; top: 0; color: #c8c8c8; font-size: 11px; line-height: 14px; }
.leave { height: 28px; padding: 0 16px; border-radius: 8px; background: #f80000; color: #fff; font-size: 13px; font-weight: 700; }
```
